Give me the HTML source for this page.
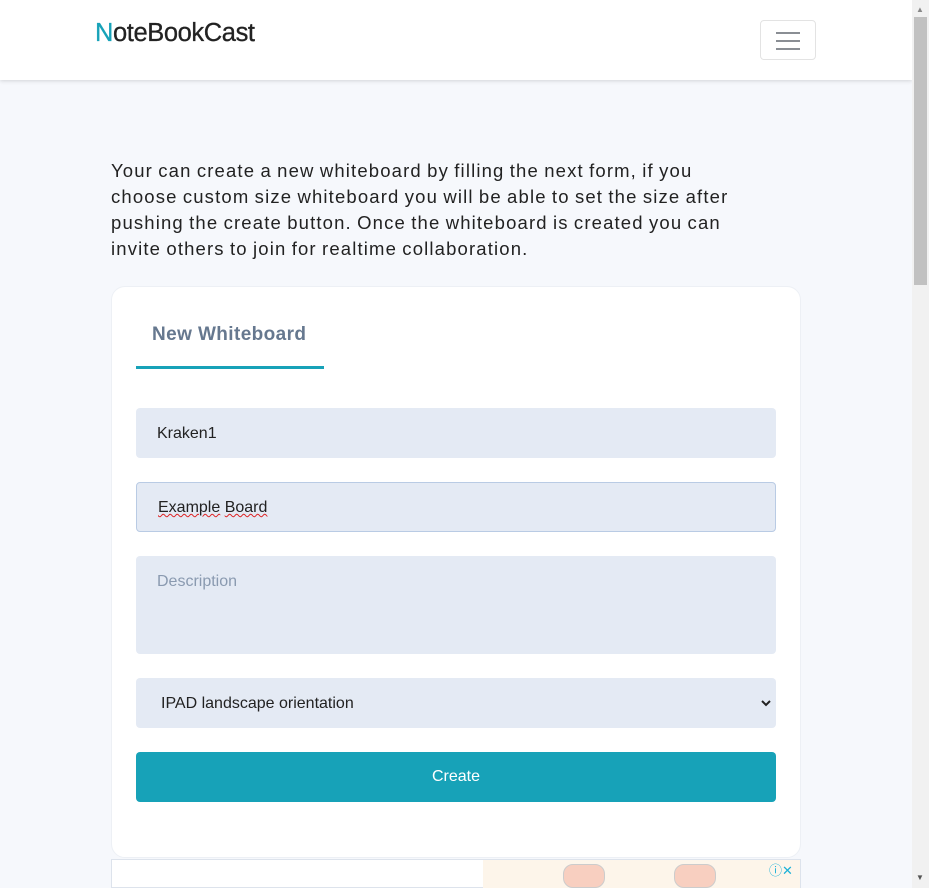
<!DOCTYPE html>
<html><head><style>
*{box-sizing:border-box;margin:0;padding:0}
body{width:929px;height:888px;overflow:hidden;background:#f6f8fc;font-family:"Liberation Sans",sans-serif;position:relative}
.hdr{position:absolute;left:0;top:0;width:912px;height:80px;background:#fff;box-shadow:0 1px 4px rgba(0,0,0,.15)}
.logo{position:absolute;left:95px;top:19px;font-size:25.5px;color:#222;letter-spacing:-0.4px;-webkit-text-stroke:0.3px #222}
.logo b{color:#17a2b8;font-weight:normal;-webkit-text-stroke:0.3px #17a2b8}
.burger{position:absolute;left:760px;top:20px;width:56px;height:40px;border:1px solid #e3e3e3;border-radius:4px}
.burger i{position:absolute;left:15px;width:24px;height:2px;background:#8a8e94}
.sb{position:absolute;left:912px;top:0;width:17px;height:888px;background:#f1f1f1}
.thumb{position:absolute;left:914px;top:17px;width:13px;height:268px;background:#c1c1c1}
.intro{position:absolute;left:111px;top:158px;width:650px;font-size:18.5px;line-height:26px;color:#222;letter-spacing:1.15px;word-spacing:-1px}
.card{position:absolute;left:111px;top:286px;width:690px;height:572px;background:#fff;border-radius:14px;border:1px solid #edf0f5}
.tab{position:absolute;left:24px;top:37px;font-size:19px;font-weight:bold;color:#66788f;padding-left:16px;letter-spacing:0.4px}
.uline{position:absolute;left:24px;top:79px;width:188px;height:3px;background:#17a2b8}
.f{position:absolute;left:24px;width:640px;background:#e4eaf4;border-radius:4px;font-size:16px;color:#222;padding-left:21px}
.btn{position:absolute;left:24px;top:465px;width:640px;height:50px;background:#17a2b8;border-radius:4px;color:#fff;font-size:16px;text-align:center;line-height:50px}
.ad{position:absolute;left:111px;top:859px;width:690px;height:29px;background:#fff;border:1px solid #dde3ec}
.ad2{position:absolute;left:483px;top:860px;width:317px;height:28px;background:#fdf5ea}
</style></head><body>
<div class="hdr"><div class="logo"><b>N</b>oteBookCast</div>
<div class="burger"><i style="top:11px"></i><i style="top:19px"></i><i style="top:27px"></i></div></div>
<div class="sb"></div><div class="thumb"></div>
<div style="position:absolute;left:916px;top:5px;font-size:8px;color:#888">▲</div>
<div style="position:absolute;left:916px;top:873px;font-size:8px;color:#555">▼</div>
<div class="intro">Your can create a new whiteboard by filling the next form, if you choose custom size whiteboard you will be able to set the size after pushing the create button. Once the whiteboard is created you can invite others to join for realtime collaboration.</div>
<div class="card">
<div class="tab">New Whiteboard</div><div class="uline"></div>
<div class="f" style="top:121px;height:50px;line-height:52px">Kraken1</div>
<div class="f" style="top:195px;height:50px;line-height:50px;border:1px solid #b9cbe4"><span style="text-decoration:underline wavy #d22;text-decoration-thickness:1px">Example</span> <span style="text-decoration:underline wavy #d22;text-decoration-thickness:1px">Board</span></div>
<div class="f" style="top:269px;height:98px;padding-top:17px;color:#8a9ab0">Description</div>
<div class="f" style="top:391px;height:50px;line-height:52px;padding-left:25px">IPAD landscape orientation<svg style="position:absolute;right:5px;top:21px" width="10" height="8" viewBox="0 0 10 8"><path d="M1 2l4 4 4-4" fill="none" stroke="#222" stroke-width="2"/></svg></div>
<div class="btn">Create</div>
</div>
<div class="ad"></div><div class="ad2"></div>
<div style="position:absolute;left:563px;top:864px;width:42px;height:24px;border-radius:10px;background:#f8cfc0;border:1px solid #ccc"></div>
<div style="position:absolute;left:674px;top:864px;width:42px;height:24px;border-radius:10px;background:#f8cfc0;border:1px solid #ccc"></div>
<div style="position:absolute;left:769px;top:860px;font-size:13px;color:#1ab1d8">ⓘ✕</div>
</body></html>
